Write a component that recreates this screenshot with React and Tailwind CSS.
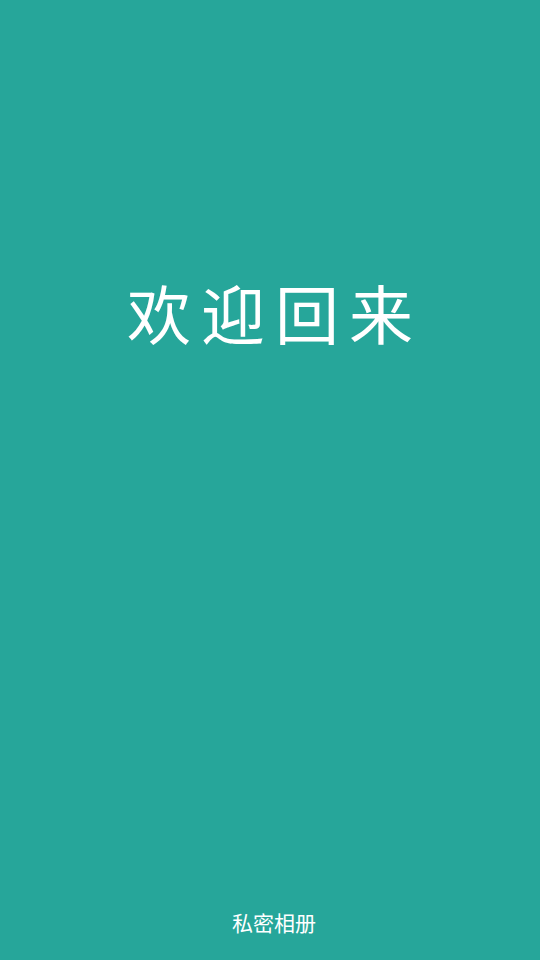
export default function App() {
  return (
    <div
      className="flex h-[960px] w-full flex-col items-center bg-[#26a69a] text-white"
      style={{ fontFamily: '"Noto Sans CJK SC", "Noto Sans", sans-serif' }}
    >
      <h1 className="mt-[276px] pl-[10px] text-[64px] font-normal leading-[70px] tracking-[10px]">欢迎回来</h1>
      <div className="flex-1" />
      <p className="mb-[23px] pl-[8px] text-[21px] leading-[30px]">私密相册</p>
    </div>
  );
}
